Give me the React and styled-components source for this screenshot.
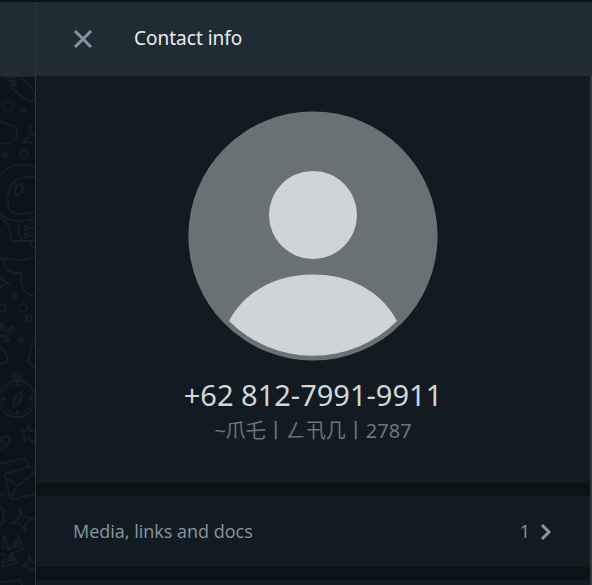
import React from 'react';
import styled, { createGlobalStyle } from 'styled-components';

const GlobalStyle = createGlobalStyle`
  *, *::before, *::after { box-sizing: border-box; }
  body {
    margin: 0;
    background: #0c1317;
    font-family: "Noto Sans", "Open Sans", "Noto Sans CJK JP", sans-serif;
  }
`;

const Layout = styled.div`
  display: grid;
  grid-template-columns: 35px minmax(0, 1fr);
  height: 100vh;
  padding-top: 2px;
  overflow: hidden;
`;

const Conversation = styled.div`
  display: flex;
  flex-direction: column;
  min-height: 0;
  background: #0b141a;
`;

const ConversationHeader = styled.div`
  flex: 0 0 75px;
  background: #202c33;
  border-bottom: 1px solid #1a242a;
`;

const Wallpaper = styled.svg`
  display: block;
  width: 100%;
  flex: 1;
  min-height: 0;
  fill: none;
  stroke: #151f25;
  stroke-width: 2;
  stroke-linecap: round;
  stroke-linejoin: round;
`;

const Drawer = styled.aside`
  display: flex;
  flex-direction: column;
  min-height: 0;
  border-left: 1px solid #2b363c;
`;

const DrawerHeader = styled.header`
  display: flex;
  align-items: center;
  flex: 0 0 74px;
  gap: 36px;
  padding: 0 32px 2px;
  background: #202c33;
`;

const IconButton = styled.button`
  display: flex;
  padding: 0;
  border: 0;
  background: none;
  color: #8696a0;
  cursor: pointer;
`;

const HeaderTitle = styled.h1`
  margin: 0;
  color: #e9edef;
  font-size: 19px;
  font-weight: 400;
  line-height: 24px;
`;

const DrawerBody = styled.div`
  display: flex;
  flex-direction: column;
  flex: 1;
  gap: 13px;
  min-height: 0;
  overflow: hidden;
  border-right: 2px solid #33393c;
  background: #0c1317;
`;

const Profile = styled.section`
  display: flex;
  flex-direction: column;
  align-items: center;
  flex: none;
  padding: 35px 36px;
  background: #111b21;
`;

const Avatar = styled.svg`
  display: block;
  width: 250px;
  height: 250px;
`;

const Phone = styled.h2`
  margin: 16px 0 0;
  color: #d1d7db;
  font-size: 29px;
  font-weight: 400;
  line-height: 36px;
`;

const PushName = styled.p`
  margin: 0;
  color: #667781;
  font-size: 20px;
  line-height: 35px;
`;

const MediaRow = styled.button`
  display: flex;
  align-items: center;
  flex: 0 0 71px;
  padding: 0 30px 2px 37px;
  border: 0;
  background: #111b21;
  color: #8696a0;
  font-family: "Open Sans", "Noto Sans", sans-serif;
  font-size: 18px;
  line-height: 24px;
  text-align: left;
  cursor: pointer;
`;

const MediaLabel = styled.span`
  flex: 1;
`;

const NextSection = styled.section`
  flex: 1;
  background: #111b21;
`;

function Doodles() {
  return (
    <Wallpaper viewBox="0 77 35 508" preserveAspectRatio="xMinYMin slice" aria-hidden="true">
      <path d="M6 78l9-1-7 5 8-2-5 6 6-1M10 88c7 1 11 11 19 13 5 1 7-3 5-8-2-7-8-12-14-15" />
      <circle cx="8" cy="106" r="5" />
      <circle cx="23" cy="110" r="2" />
      <path d="M-1 122c5-1 7 0 8 3 6-1 11 3 10 9-1 7-9 11-18 9" />
      <path d="M30 125c1 7 1 9 6 12M30 125c1 9-1 14-8 17 6-1 10 0 14 4" />
      <circle cx="5" cy="155" r="2" />
      <circle cx="24" cy="155" r="4" />
      <path d="M-1 177c6-11 21-16 37-10M36 177c-18-1-27 4-28 20-1 8 2 17 10 17 6 0 10-3 18-1M-1 213c8 9 20 10 37 5" />
      <path d="M15 192c0-6 3-9 7-8 2 6-1 10-4 11-2 0-3-1-3-3z" />
      <path d="M-1 219c8 0 12 10 12 22h17l7-1M23 221c-6 4-6 12-1 19M31 242v4l5 1" />
      <circle cx="26" cy="228" r="2" />
      <circle cx="26" cy="236" r="2" />
      <circle cx="32" cy="223" r="1" />
      <circle cx="33" cy="232" r="4" />
      <path d="M-1 258c12 1 20 3 30 1 4-1 5-3 7-6M4 258c-2 10 4 16 18 15-3 11 1 22 14 23" />
      <path d="M-1 275c2 5 5 7 11 8-6 0-9 3-11 7" />
      <circle cx="15" cy="296" r="2" />
      <circle cx="2" cy="308" r="4" />
      <circle cx="23" cy="308" r="4" />
      <circle cx="29" cy="318" r="3" />
      <path d="M3 323l2 8 8-4 1 3-8 4 3 7-3 1-3-7-5 2M-1 329l3 1-1-7z" />
      <circle cx="21" cy="340" r="2" />
      <path d="M-1 346c5 3 9 9 9 15-2 2-5 2-9 3M36 334l-8 25c0 4 3 6 8 8" />
      <circle cx="17" cy="399" r="18" />
      <circle cx="17" cy="399" r="15" strokeWidth="1" />
      <circle cx="17" cy="377" r="5" />
      <circle cx="17" cy="377" r="2" />
      <path d="M22 391l-8 6-1 11 8-7zM14 397l7 4M17 384v3M17 411v3M2 399h3M29 399h3" />
      <path d="M-1 441c4-7 11-5 10 0-1 4-6 8-10 8M0 441c3-2 4 0 3 2" />
      <path d="M29 425l1 6 6-1M29 425l-3 5-5 1 4 4-1 6 5-3 5 6 1-9" />
      <path d="M-1 464l23-5c5-1 5 1 6 7M5 474l31-9M5 474c-1 1-1 2 0 3l5 20c1 2 2 2 4 2l22-5M5 477l13 9 18-15M18 486l-8 13M-1 495l5-1" />
      <path d="M-1 506c3 2 5 3 5 6l-1 5 1 5-5 2M20 507c1 9 5 11 14 12-8 2-9 6-9 13-2-7-6-10-14-8 8-3 10-8 9-17z" />
      <path d="M4 536l6 14 9-14 4 13-11 4 4 10-14 4 3-12-6-1M18 541l-4 7 5-1zM11 554l-4 8 6-2zM4 536l-1 11 7 3" />
      <path d="M29 554c1 7 3 8 7 9M29 554c1 7-2 10-7 12 6 0 8 2 8 6l6-5M-1 582l21-2 3 6" />
    </Wallpaper>
  );
}

function DefaultAvatar() {
  return (
    <Avatar viewBox="0 0 250 250" role="img" aria-label="Profile photo">
      <circle cx="125" cy="125" r="124.6" fill="#6a7175" />
      <g fill="#cfd4d6">
        <circle cx="125" cy="104" r="44" />
        <path d="M41 210C57 180 88 163.500 125 163.500S193 180 209 210A119 119 0 0 1 41 210Z" />
      </g>
    </Avatar>
  );
}

export default function App() {
  return (
    <>
      <GlobalStyle />
      <Layout>
        <Conversation>
          <ConversationHeader />
          <Doodles />
        </Conversation>
        <Drawer>
          <DrawerHeader>
            <IconButton type="button" aria-label="Close">
              <svg width="30" height="30" viewBox="0 0 30 30" fill="none" stroke="currentColor" strokeWidth="3">
                <path d="M7 8l16 16M23 8L7 24" />
              </svg>
            </IconButton>
            <HeaderTitle>Contact info</HeaderTitle>
          </DrawerHeader>
          <DrawerBody>
            <Profile>
              <DefaultAvatar />
              <Phone>+62 812-7991-9911</Phone>
              <PushName>~爪乇丨ㄥ卂几丨2787</PushName>
            </Profile>
            <MediaRow type="button">
              <MediaLabel>Media, links and docs</MediaLabel>
              <span>1</span>
              <svg width="30" height="30" viewBox="0 0 30 30" fill="none" stroke="currentColor" strokeWidth="3">
                <path d="M12 9l7 7-7 7" />
              </svg>
            </MediaRow>
            <NextSection />
          </DrawerBody>
        </Drawer>
      </Layout>
    </>
  );
}
